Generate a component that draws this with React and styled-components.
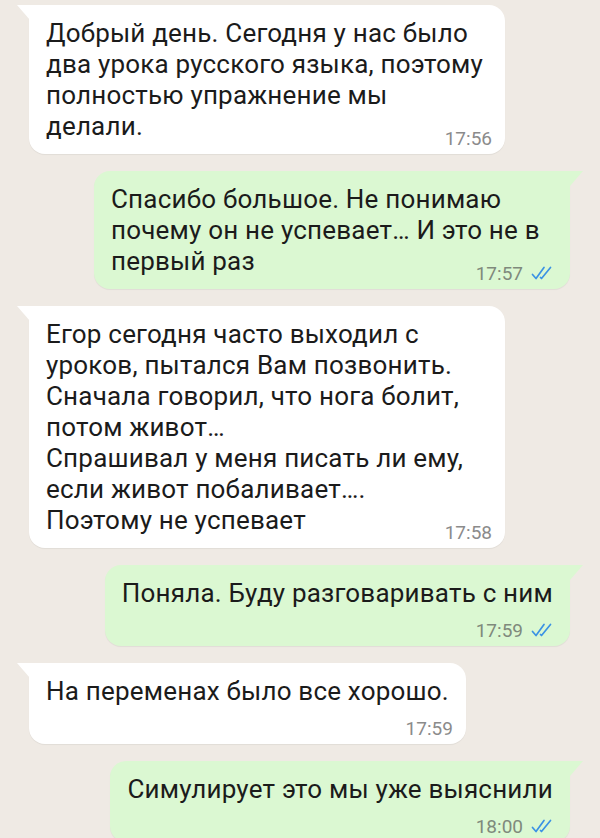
import styled, { createGlobalStyle } from "styled-components";

const GlobalStyle = createGlobalStyle`
  html, body {
    margin: 0;
    padding: 0;
    background: #efeae4;
  }
  body {
    font-family: Roboto, "Noto Sans", sans-serif;
    -webkit-font-smoothing: antialiased;
  }
`;

const StyledChat = styled.div`
  width: 600px;
  height: 838px;
  overflow: hidden;
  box-sizing: border-box;
  padding: 5px 17px 0;
  display: flex;
  flex-direction: column;
  gap: 17px;
  background: #efeae4;
`;

const Bubble = styled.div`
  position: relative;
  box-sizing: border-box;
  max-width: 476px;
  width: fit-content;
  display: flex;
  flex-direction: column;
  padding: 13px 17px 5px 17px;
  border-radius: 16px;
  box-shadow: 0 1px 1px rgba(0, 0, 0, 0.06);
  align-self: ${(p) => (p.$out ? "flex-end" : "flex-start")};
  margin: ${(p) => (p.$out ? "0 13px 0 0" : "0 0 0 12px")};
  background: ${(p) => (p.$out ? "#dbf8d2" : "#ffffff")};
  border-top-left-radius: ${(p) => (p.$out ? "16px" : "0")};
  border-top-right-radius: ${(p) => (p.$out ? "0" : "16px")};

  &::before {
    content: "";
    position: absolute;
    top: 0;
    width: 13px;
    height: 15px;
    background: inherit;
    ${(p) =>
      p.$out
        ? "right: -13px; clip-path: polygon(0 0, 100% 0, 0 100%);"
        : "left: -12px; clip-path: polygon(0 0, 100% 0, 100% 100%);"}
  }
`;

const Text = styled.p`
  margin: 0;
  font-size: 26px;
  line-height: 31px;
  color: #1b1b1b;
  white-space: pre-line;
  letter-spacing: 0.2px;
`;

const Meta = styled.div`
  align-self: flex-end;
  display: flex;
  align-items: center;
  gap: 8px;
  height: 22px;
  margin-top: ${(p) => (p.$inline ? "-15px" : "10px")};
  margin-right: ${(p) => (p.$out ? "0" : "-4px")};
  font-size: 19px;
  color: ${(p) => (p.$out ? "#7f8a7c" : "#8b8b8b")};
`;

function Ticks() {
  return (
    <svg width="22" height="14" viewBox="0 0 22 14" fill="none">
      <path
        d="M1.5 8.5 L5 12.5 L13 1.5"
        stroke="#3b92e4"
        strokeWidth="1.7"
        strokeLinecap="round"
        strokeLinejoin="round"
      />
      <path
        d="M9.5 11.5 L10.5 12.5 L19.5 1.5"
        stroke="#3b92e4"
        strokeWidth="1.7"
        strokeLinecap="round"
        strokeLinejoin="round"
      />
    </svg>
  );
}

const messages = [
  {
    text: "Добрый день. Сегодня у нас было два урока русского языка, поэтому полностью упражнение мы делали.",
    time: "17:56",
    inline: true,
  },
  {
    out: true,
    text: "Спасибо большое. Не понимаю почему он не успевает… И это не в первый раз",
    time: "17:57",
    inline: true,
  },
  {
    text: "Егор сегодня часто выходил с уроков, пытался Вам позвонить. Сначала говорил, что нога болит, потом живот…\nСпрашивал у меня писать ли ему, если живот побаливает….\nПоэтому не успевает",
    time: "17:58",
    inline: true,
  },
  {
    out: true,
    text: "Поняла. Буду разговаривать с ним",
    time: "17:59",
  },
  {
    text: "На переменах было все хорошо.",
    time: "17:59",
  },
  {
    out: true,
    text: "Симулирует это мы уже выяснили",
    time: "18:00",
  },
];

export default function App() {
  return (
    <>
      <GlobalStyle />
      <StyledChat>
        {messages.map((m, i) => (
          <Bubble key={i} $out={m.out}>
            <Text>{m.text}</Text>
            <Meta $inline={m.inline} $out={m.out}>
              {m.time}
              {m.out && <Ticks />}
            </Meta>
          </Bubble>
        ))}
      </StyledChat>
    </>
  );
}
